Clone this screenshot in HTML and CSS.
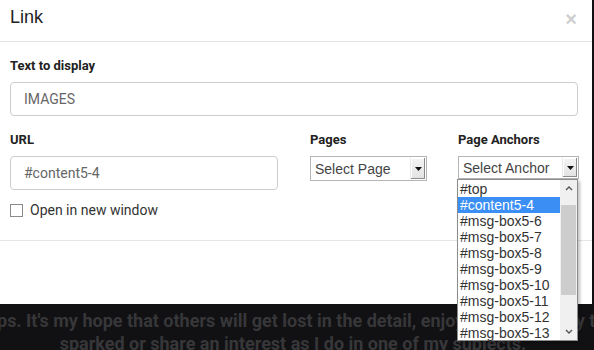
FILE: index.html
```html
<!DOCTYPE html>
<html lang="en">
<head>
    <meta charset="UTF-8">
    <meta name="viewport" content="width=device-width, initial-scale=1.0">
    <title>Link</title>
    <link rel="stylesheet" href="styles.css">
</head>
<body>
    <div class="modal">
        <div class="modal-header">
            <h4 class="modal-title">Link</h4>
            <span class="close">&times;</span>
        </div>

        <div class="modal-body">
            <label class="field-label">Text to display</label>
            <input class="text-input" type="text" value="IMAGES">

            <div class="link-row">
                <div class="col">
                    <label class="field-label">URL</label>
                    <input class="text-input" type="text" value="#content5-4">
                    <label class="check">
                        <span class="check-box"></span>
                        Open in new window
                    </label>
                </div>

                <div class="col">
                    <label class="field-label">Pages</label>
                    <div class="select select-page">
                        <span>Select Page</span>
                        <span class="select-btn">
                            <svg width="7" height="4" viewBox="0 0 7 4"><path d="M0 0h7L3.5 4z" fill="#111"/></svg>
                        </span>
                    </div>
                </div>

                <div class="col">
                    <label class="field-label">Page Anchors</label>
                    <div class="select-wrap">
                        <div class="select select-anchor">
                            <span>Select Anchor</span>
                            <span class="select-btn">
                                <svg width="7" height="4" viewBox="0 0 7 4"><path d="M0 0h7L3.5 4z" fill="#111"/></svg>
                            </span>
                        </div>

                        <div class="dropdown">
                            <ul class="options">
                                <li>#top</li>
                                <li class="active">#content5-4</li>
                                <li>#msg-box5-6</li>
                                <li>#msg-box5-7</li>
                                <li>#msg-box5-8</li>
                                <li>#msg-box5-9</li>
                                <li>#msg-box5-10</li>
                                <li>#msg-box5-11</li>
                                <li>#msg-box5-12</li>
                                <li>#msg-box5-13</li>
                            </ul>
                            <div class="scrollbar">
                                <span class="scroll-arrow">
                                    <svg width="8" height="5" viewBox="0 0 8 5"><path d="M1 4L4 1l3 3" fill="none" stroke="#555" stroke-width="1.4"/></svg>
                                </span>
                                <span class="scroll-track">
                                    <span class="scroll-thumb"></span>
                                </span>
                                <span class="scroll-arrow">
                                    <svg width="8" height="5" viewBox="0 0 8 5"><path d="M1 1l3 3 3-3" fill="none" stroke="#555" stroke-width="1.4"/></svg>
                                </span>
                            </div>
                        </div>
                    </div>
                </div>
            </div>
        </div>

        <div class="modal-footer"></div>
    </div>

    <div class="backdrop-text">
        <p class="line line-first">ps. It's my hope that others will get lost in the detail, enjoy the geography that has been</p>
        <p class="line line-second">sparked or share an interest as I do in one of my subjects.</p>
    </div>
</body>
</html>
```

FILE: styles.css
```css
* {
    margin: 0;
    padding: 0;
    box-sizing: border-box;
}

body {
    width: 594px;
    height: 350px;
    overflow: hidden;
    background: #111113;
    font-family: Roboto, "Liberation Sans", sans-serif;
}

.modal {
    width: 592px;
    height: 304px;
    background: #fff;
    display: flex;
    flex-direction: column;
}

/* header */
.modal-header {
    height: 42px;
    padding: 6px 15px 0 10px;
    border-bottom: 1px solid #e5e5e5;
    display: flex;
    justify-content: space-between;
    align-items: flex-start;
}

.modal-title {
    font-family: "Liberation Sans", Arial, sans-serif;
    font-size: 18px;
    font-weight: 400;
    color: #222;
    line-height: 22px;
}

.close {
    font-family: "Liberation Sans", Arial, sans-serif;
    font-size: 20px;
    font-weight: 700;
    line-height: 20px;
    color: #cfcfcf;
    margin-top: 3px;
}

/* body */
.modal-body {
    padding: 16px 14px 0 10px;
    height: 199px;
    border-bottom: 1px solid #e5e5e5;
}

.field-label {
    display: block;
    font-size: 13px;
    font-weight: 700;
    color: #222;
    line-height: 16px;
    margin-bottom: 8px;
}

.text-input {
    display: block;
    width: 100%;
    height: 34px;
    padding: 0 13px;
    border: 1px solid #ccc;
    border-radius: 4px;
    font-family: Roboto, "Liberation Sans", sans-serif;
    font-size: 14px;
    color: #666;
    background: #fff;
    outline: none;
}

.link-row {
    display: grid;
    grid-template-columns: 268px 117px 120px;
    column-gap: 32px;
    margin-top: 16px;
}

.link-row .col:nth-child(3) {
    margin-left: -1px;
}

.check {
    display: flex;
    align-items: center;
    margin-top: 12px;
    font-size: 14px;
    color: #333;
    line-height: 16px;
}

.check-box {
    width: 13px;
    height: 13px;
    border: 1px solid #8a8a8a;
    background: #fff;
    margin-right: 7px;
    margin-top: 1px;
}

/* fake native selects */
.select-wrap {
    position: relative;
}

.select {
    display: flex;
    align-items: center;
    justify-content: space-between;
    height: 25px;
    padding: 1px 1px 1px 4px;
    border: 1px solid #b5b5b5;
    background: #fff;
    font-family: "Liberation Sans", Arial, sans-serif;
    font-size: 14px;
    color: #444;
}

.select-anchor {
    height: 23px;
    padding-left: 4px;
}

.select-btn {
    width: 15px;
    height: 100%;
    display: flex;
    align-items: center;
    justify-content: center;
    background: linear-gradient(#f4f4f4, #e2e2e2);
    border-left: 1px solid #e8e8e8;
    box-shadow: inset -1px -1px 0 #8c8c8c, inset 1px 1px 0 #fff;
}

.dropdown {
    position: absolute;
    top: 100%;
    left: -1px;
    width: 121px;
    height: 162px;
    display: flex;
    border: 1px solid #8c8c8c;
    background: #fff;
    box-shadow: 2px 2px 3px rgba(0, 0, 0, 0.25);
    z-index: 10;
}

.options {
    flex: 1;
    list-style: none;
    padding-top: 1px;
    font-family: "Liberation Sans", Arial, sans-serif;
    font-size: 14px;
    line-height: 16px;
    color: #333;
}

.options li {
    padding-left: 2px;
    white-space: nowrap;
}

.options .active {
    background: #3b8ff4;
    color: #fff;
}

.scrollbar {
    width: 17px;
    display: flex;
    flex-direction: column;
    background: #f0f0f0;
}

.scroll-arrow {
    height: 17px;
    display: flex;
    align-items: center;
    justify-content: center;
}

.scroll-track {
    flex: 1;
    padding: 8px 1px 0;
}

.scroll-thumb {
    display: block;
    height: 90px;
    background: #cdcdcd;
}

.modal-footer {
    flex: 1;
}

/* page behind the modal */
.backdrop-text {
    padding-top: 5px;
    font-family: Roboto, "Liberation Sans", sans-serif;
    font-size: 18px;
    font-weight: 700;
    color: #37373a;
    line-height: 23px;
    white-space: nowrap;
}

.line-first {
    text-indent: -3px;
}

.line-second {
    display: flex;
    justify-content: center;
    padding-right: 8px;
}
```
